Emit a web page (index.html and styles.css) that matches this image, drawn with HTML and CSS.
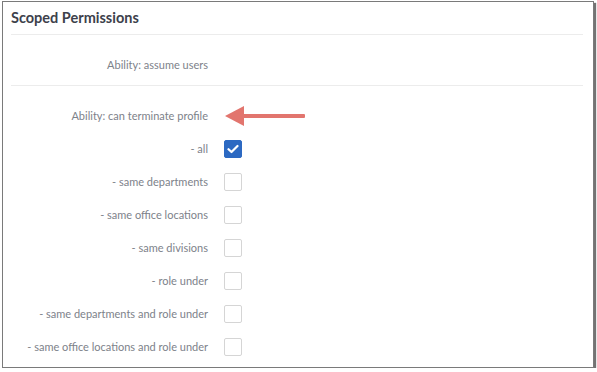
FILE: index.html
```html
<!DOCTYPE html>
<html lang="en">
<head>
  <meta charset="UTF-8">
  <title>Scoped Permissions</title>
  <link rel="stylesheet" href="styles.css">
</head>
<body>
  <div class="frame">
    <div class="panel">
      <h2 class="panel-title">Scoped Permissions</h2>

      <div class="section">
        <div class="row">
          <span class="label">Ability: assume users</span>
        </div>
      </div>

      <div class="section last">
        <div class="row">
          <span class="label">Ability: can terminate profile</span>
          <svg class="arrow" width="82" height="22" viewBox="0 0 82 22">
            <polygon points="0,11 19,1 19,21" fill="#e2756e"/>
            <rect x="17" y="9" width="63" height="4" rx="1" fill="#e2756e"/>
          </svg>
        </div>
        <div class="row">
          <span class="label">- all</span>
          <span class="check checked">
            <svg width="12" height="10" viewBox="0 0 12 10"><path d="M1.5 5.2 L4.5 8 L10.5 2" fill="none" stroke="#fff" stroke-width="2.2" stroke-linecap="round" stroke-linejoin="round"/></svg>
          </span>
        </div>
        <div class="row">
          <span class="label">- same departments</span>
          <span class="check"></span>
        </div>
        <div class="row">
          <span class="label">- same office locations</span>
          <span class="check"></span>
        </div>
        <div class="row">
          <span class="label">- same divisions</span>
          <span class="check"></span>
        </div>
        <div class="row">
          <span class="label">- role under</span>
          <span class="check"></span>
        </div>
        <div class="row">
          <span class="label">- same departments and role under</span>
          <span class="check"></span>
        </div>
        <div class="row">
          <span class="label">- same office locations and role under</span>
          <span class="check"></span>
        </div>
      </div>
    </div>
  </div>
</body>
</html>
```

FILE: styles.css
```css
body {
  margin: 0;
  background-color: #fff;
  font-family: Lato, "Open Sans", Arial, sans-serif;
}
.frame {
  margin: 1px 0 0 2px;
  width: 590px;
  height: 365px;
  border: 1px solid #7a7a7a;
  background-color: #fff;
  box-shadow: 2px 2px 1px rgba(0, 0, 0, 0.55);
  overflow: hidden;
}
.panel {
  padding: 0 10px 0 8px;
}
.panel-title {
  margin: 0;
  height: 32px;
  line-height: 31px;
  font-size: 14.5px;
  font-weight: 700;
  color: #3d414b;
  border-bottom: 1px solid #ececec;
}
.section {
  padding: 13px 0 4px;
  border-bottom: 1px solid #ececec;
}
.section.last {
  border-bottom: none;
}
.row {
  display: grid;
  grid-template-columns: 197px auto;
  column-gap: 16px;
  align-items: center;
  height: 33px;
}
.label {
  text-align: right;
  font-size: 11px;
  color: #7d828a;
}
.check {
  display: flex;
  align-items: center;
  justify-content: center;
  width: 16px;
  height: 16px;
  border: 1px solid #d5d5d5;
  border-radius: 2px;
  background-color: #fff;
}
.check.checked {
  background-color: #2c69c2;
  border-color: #2c69c2;
}
.arrow {
  display: block;
  margin-left: 1px;
}
```
